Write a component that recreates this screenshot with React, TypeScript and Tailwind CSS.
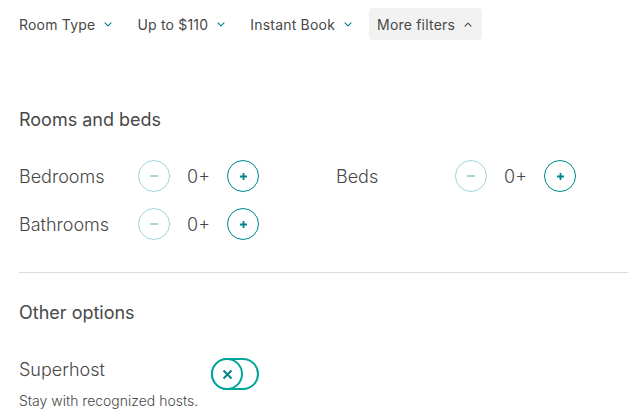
import React from 'react';

const TEAL = '#008489';

const Chevron: React.FC<{ up?: boolean }> = ({ up }) => (
  <svg width="8" height="5" viewBox="0 0 8 5" className="ml-[9px]" fill="none">
    <path
      d={up ? 'M1 4.2L4 1.2L7 4.2' : 'M1 0.8L4 3.8L7 0.8'}
      stroke={up ? '#484848' : TEAL}
      strokeWidth="1.1"
      strokeLinecap="round"
      strokeLinejoin="round"
    />
  </svg>
);

const FilterButton: React.FC<{ label: string; active?: boolean }> = ({ label, active }) => (
  <button
    className={`flex items-center h-8 px-2 rounded text-[14px] tracking-[0.2px] text-[#484848] ${active ? 'bg-[#f2f2f2] pr-[10px]' : ''}`}
  >
    <span>{label}</span>
    <Chevron up={active} />
  </button>
);

// counter with - / + round buttons
const Counter: React.FC<{ label: string }> = ({ label }) => (
  <div className="flex items-center h-8">
    <span className="w-[119px] text-[18px] font-light text-[#484848]">{label}</span>
    <div className="flex items-center">
      <div className="w-8 h-8 rounded-full border border-[#a6d3d5] flex items-center justify-center">
        <div className="w-[8px] h-[1.5px] bg-[#a6d3d5]" />
      </div>
      <span className="w-[57px] text-center text-[18px] font-light text-[#484848]">0+</span>
      <div className="w-8 h-8 rounded-full border border-[#008489] flex items-center justify-center">
        <svg width="9" height="9" viewBox="0 0 9 9">
          <path d="M4.5 1V8M1 4.5H8" stroke={TEAL} strokeWidth="1.8" />
        </svg>
      </div>
    </div>
  </div>
);

export default function App() {
  return (
    <div className="w-[644px] h-[414px] bg-white overflow-hidden font-['Inter',sans-serif] text-[#484848]">
      <div className="flex items-center gap-[9px] pl-[11px] pt-2">
        <FilterButton label="Room Type" />
        <FilterButton label="Up to $110" />
        <FilterButton label="Instant Book" />
        <FilterButton label="More filters" active />
      </div>

      <div className="px-[19px]">
        <h2 className="mt-[68px] text-[18px] leading-6">Rooms and beds</h2>
        <div className="mt-[28px] flex flex-col gap-4">
          <div className="flex">
            <div className="w-[317px]">
              <Counter label="Bedrooms" />
            </div>
            <Counter label="Beds" />
          </div>
          <Counter label="Bathrooms" />
        </div>

        <div className="mt-[32px] border-t border-[#dcdcdc] mr-[-3px]" />

        <h2 className="mt-[28px] text-[18px] leading-6">Other options</h2>

        <div className="mt-[33px] flex">
          <div className="w-[192px]">
            <div className="text-[18px] font-light leading-6">Superhost</div>
            <div className="mt-[9px] text-[14px] font-light leading-5">Stay with recognized hosts.</div>
          </div>
          <div className="relative w-12 h-8 rounded-full border-2 border-[#00a699]">
            <div className="absolute -left-[2px] -top-[2px] w-8 h-8 rounded-full border-2 border-[#00a699] bg-white flex items-center justify-center">
              <svg width="11" height="11" viewBox="0 0 11 11">
                <path d="M1.5 1.5L9.5 9.5M9.5 1.5L1.5 9.5" stroke="#008489" strokeWidth="2" />
              </svg>
            </div>
          </div>
        </div>
      </div>
    </div>
  );
}
